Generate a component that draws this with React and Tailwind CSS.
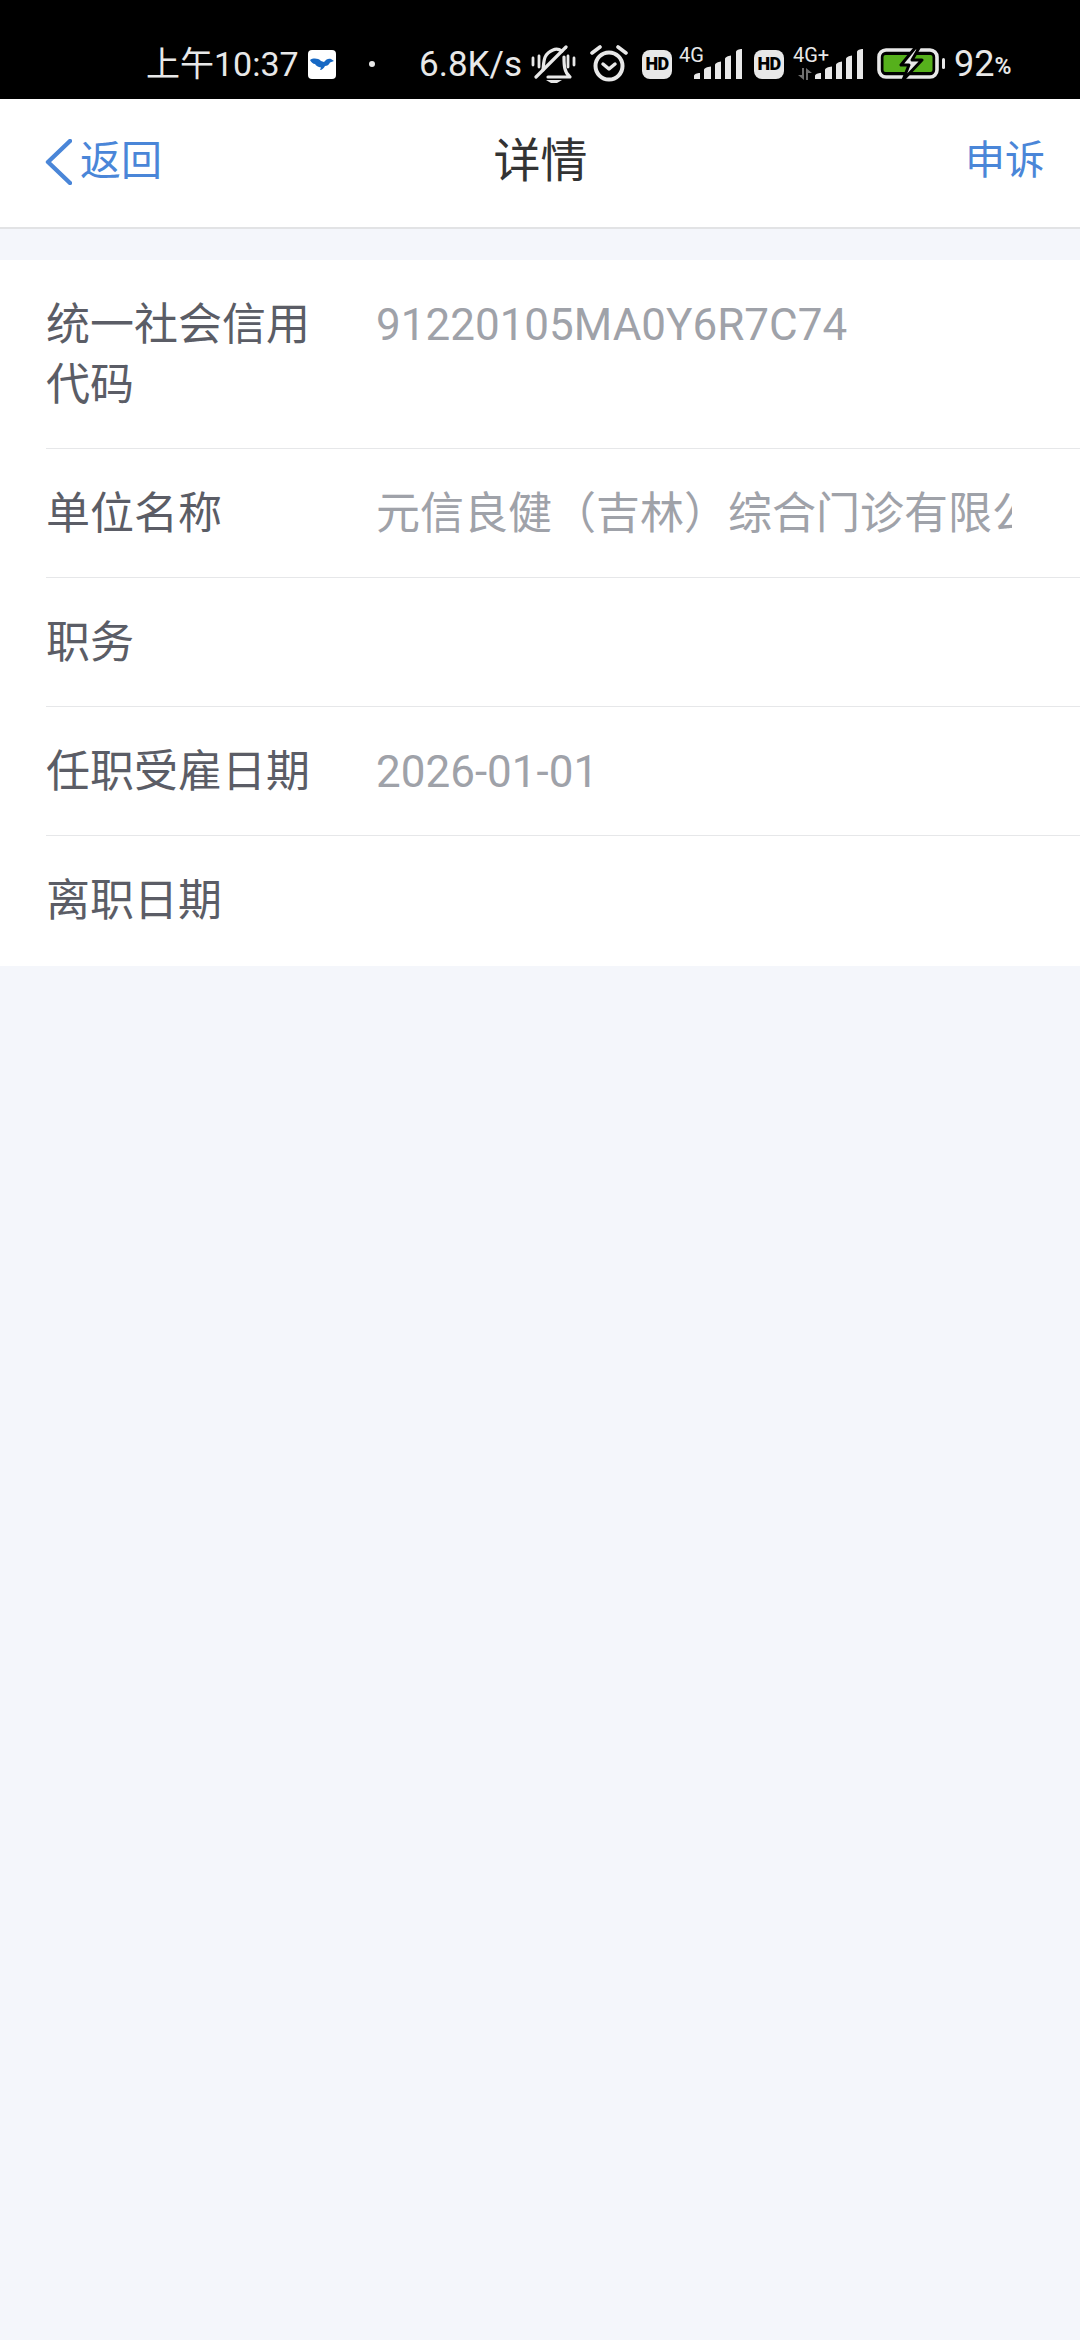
const FONT = "font-['Roboto','Noto_Sans_CJK_SC',sans-serif]";

function Bars({ className = "" }) {
  return (
    <svg className={className} width="48" height="30" viewBox="0 0 48 30" fill="#e8e8e8">
      <path d="M0 30 V27 C0 25 3 24 6 24 V30 Z" />
      <path d="M10 30 V21 C10 19 13 18 17 17.5 V30 Z" />
      <path d="M21 30 V16 C21 14 24 13 27 12.5 V30 Z" />
      <path d="M31 30 V10 C31 8 34 7 37 6.5 V30 Z" />
      <path d="M42 30 V3 C42 1 45 0 48 0 V30 Z" />
    </svg>
  );
}

function HD() {
  return (
    <div className="flex h-[29px] w-[30px] items-center justify-center rounded-[8px] bg-[#e8e8e8] text-[18px] leading-none font-black tracking-[-0.6px] text-black">
      HD
    </div>
  );
}

function App() {
  const rows = [
    ["统一社会信用代码", "91220105MA0Y6R7C74"],
    ["单位名称", "元信良健（吉林）综合门诊有限公司"],
    ["职务", ""],
    ["任职受雇日期", "2026-01-01"],
    ["离职日期", ""],
  ];
  return (
    <div className={`${FONT} flex min-h-[2340px] w-[1080px] flex-col bg-[#f4f6fb]`}>
      {/* status bar */}
      <div className="flex h-[99px] items-center bg-black pt-[29px] pl-[146px] text-[#e8e8e8]">
        <span className="w-[155px] text-[34px] leading-none whitespace-nowrap">上午10:37</span>
        <div className="ml-[7px] flex h-[29px] w-[28px] items-center justify-center rounded-[4px] bg-white">
          <svg width="24" height="13" viewBox="0 0 24 13" fill="#1668c4">
            <path d="M0 2 C3 0 8 0 11 3 L14 4 C16 1 19 0 21 1 L24 3 L20 4.5 C19 7 17 8 15 8 C14 10 12 12 10 12 L11 9.5 C8 9 6 8 5 6 C3 6 1 4 0 2 Z" />
          </svg>
        </div>
        <div className="ml-[33px] h-[6px] w-[6px] rounded-full bg-[#e8e8e8]" />
        <span className="ml-[44px] w-[104px] text-[35px] leading-none whitespace-nowrap">6.8K/s</span>
        <svg className="ml-[8px]" width="46" height="38" viewBox="0 0 46 38" fill="none" stroke="#e8e8e8" strokeWidth="3.2" strokeLinecap="round" strokeLinejoin="round">
          <path d="M12 25 C13 17 12 9 22 5 C25 3.5 28 4 31 6" />
          <path d="M33 12 C33 20 33 27 39 32 H17" />
          <path d="M35 2 L5 32" />
          <path d="M15 35 H31 L26 38 H20 Z" fill="#e8e8e8" stroke="none" />
          <path d="M2 13 V20 M8 11 V22 M37 11 V22 M43 13 V20" strokeWidth="2.8" />
        </svg>
        <svg className="ml-[12px]" width="40" height="38" viewBox="0 0 40 38" fill="none" stroke="#e8e8e8" strokeWidth="4" strokeLinecap="round" strokeLinejoin="round">
          <circle cx="20" cy="21" r="13.5" />
          <path d="M14 19 L20 24 L26 19" strokeWidth="3.5" />
          <path d="M3 8 L11 2 M37 8 L29 2" strokeWidth="3.6" />
        </svg>
        <div className="ml-[13px]"><HD /></div>
        <div className="relative ml-[7px] h-[34px] w-[63px] self-center">
          <span className="absolute top-[-2px] left-0 text-[20px] leading-none">4G</span>
          <Bars className="absolute top-[2px] left-[15px]" />
        </div>
        <div className="ml-[12px]"><HD /></div>
        <div className="relative ml-[9px] h-[34px] w-[70px] self-center">
          <span className="absolute top-[-2px] left-0 text-[20px] leading-none">4G+</span>
          <svg className="absolute top-[21px] left-[4px]" width="16" height="12" viewBox="0 0 16 12" fill="#6f6f6f">
            <path d="M5 0 H7 V12 L1 7 H5 Z M9 0 L15 5 H11 V12 H9 Z" />
          </svg>
          <Bars className="absolute top-[2px] left-[22px]" />
        </div>
        <svg className="ml-[14px]" width="69" height="34" viewBox="0 0 69 34" fill="none">
          <rect x="2" y="3" width="58" height="27" rx="7" stroke="#e8e8e8" strokeWidth="3.6" />
          <rect x="6.5" y="8" width="49" height="17" rx="2" fill="#56b01c" />
          <rect x="65" y="11" width="3" height="11" rx="1.5" fill="#e8e8e8" />
          <path d="M38 1 L24 18 H32 L26 33 L45 13 H35 L42 1 Z" fill="#e8e8e8" stroke="#000" strokeWidth="3" strokeLinejoin="round" />
        </svg>
        <span className="ml-[8px] text-[36px] leading-none">92</span>
        <span className="mt-[5px] text-[23px] leading-none font-semibold">%</span>
      </div>

      {/* nav bar */}
      <div className="grid h-[130px] grid-cols-3 items-center border-b-2 border-[#e2e3e5] bg-white pr-[35px] pl-[45px]">
        <div className="flex items-center pb-[3px] text-[#4a86d8]">
          <svg width="27" height="46" viewBox="0 0 27 46" fill="none" stroke="#4a86d8" strokeWidth="4.4" strokeLinecap="round" strokeLinejoin="round">
            <path d="M25 2 L3 23 L25 44" />
          </svg>
          <span className="ml-[8px] pb-[1px] text-[41px] leading-none">返回</span>
        </div>
        <div className="pr-[9px] pb-[6px] text-center text-[47px] leading-none text-[#333333]">详情</div>
        <div className="pb-[4px] text-right text-[40px] leading-none text-[#4a86d8]">申诉</div>
      </div>

      {/* details */}
      <div className="mt-[31px] flex flex-col bg-white pl-[46px]">
        {rows.map(([label, value], i) => (
          <div key={label} className={`flex pt-[35px] pb-[33px] text-[44px] leading-[60px] ${i < rows.length - 1 ? "border-b border-[#e6e7e9]" : "pb-[35px]"}`}>
            <div className="w-[264px] shrink-0 text-[#5b5d66]">{label}</div>
            <div className="ml-[66px] w-[636px] overflow-hidden whitespace-nowrap text-[#9fa2a9]">{value}</div>
          </div>
        ))}
      </div>
    </div>
  );
}

export default App;
